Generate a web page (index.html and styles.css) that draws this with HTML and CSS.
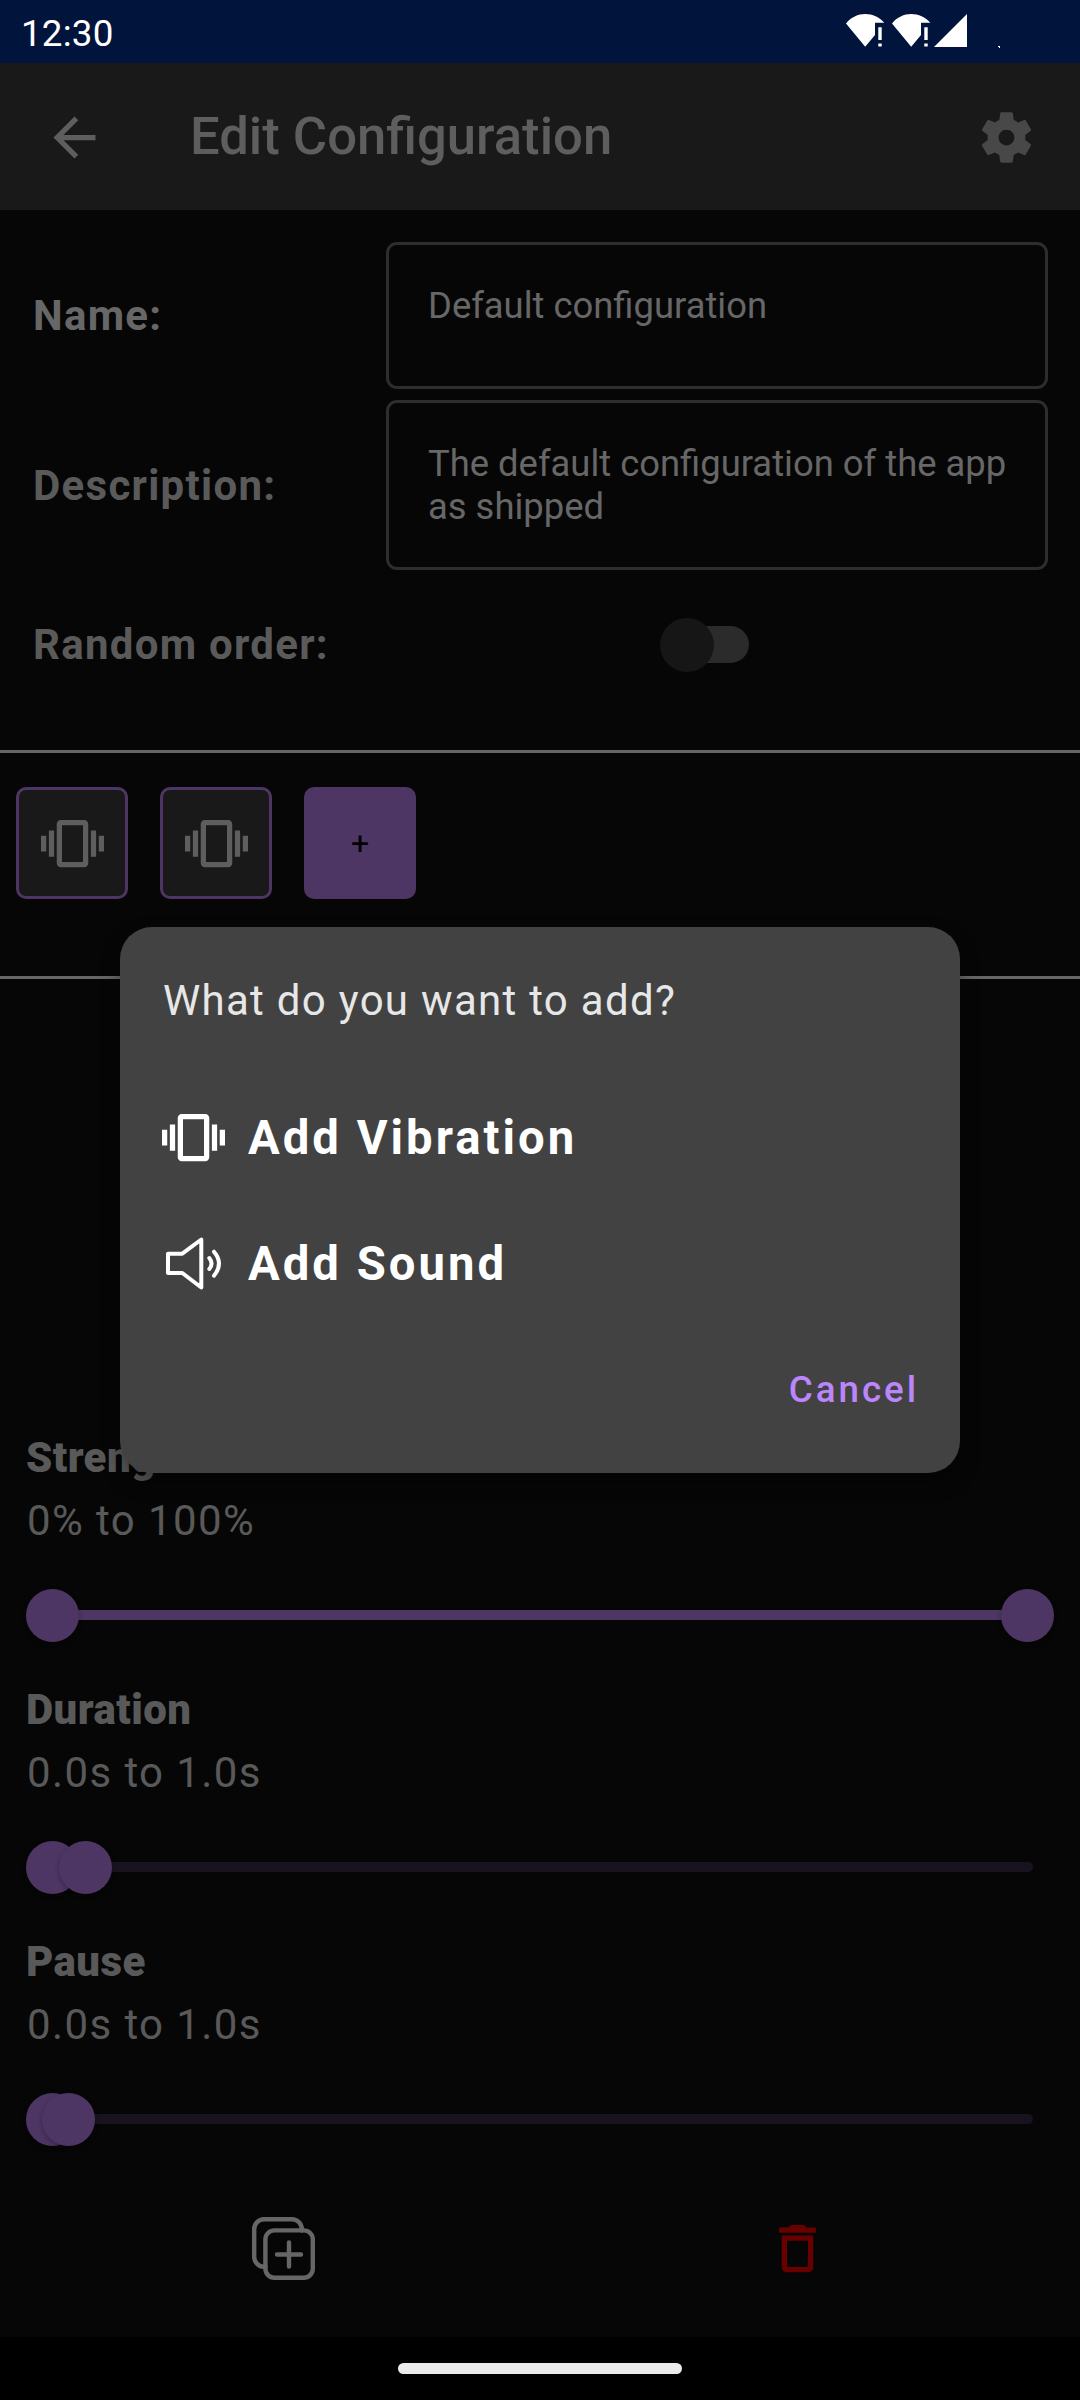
FILE: index.html
```html
<!DOCTYPE html>
<html lang="en">
<head>
<meta charset="utf-8">
<title>Edit Configuration</title>
<link rel="stylesheet" href="styles.css">
</head>
<body>
<svg class="defs" aria-hidden="true">
  <symbol id="vibration" viewBox="0 0 24 24"><path d="M0 15h2V9H0v6zm3 2h2V7H3v10zm19-8v6h2V9h-2zm-3 8h2V7h-2v10zM16.5 3h-9C6.67 3 6 3.67 6 4.5v15c0 .83.67 1.5 1.5 1.5h9c.83 0 1.5-.67 1.5-1.5v-15c0-.83-.67-1.5-1.5-1.5zM16 19H8V5h8v14z"/></symbol>
  <symbol id="wifi-alert" viewBox="0 0 40 34"><path d="M0 9.5C5 3.200 12 0 19.200 0S33.500 3.200 38.300 8.700H29V21L19.200 32.800z"/><path d="M32.300 13.300h3.400v12.800h-3.400zM32.300 29.600h3.400v3h-3.400z"/></symbol>
</svg>

<div class="screen">
  <header class="status-bar">
    <span class="clock">12:30</span>
    <div class="status-icons">
      <svg class="wifi"><use href="#wifi-alert"/></svg>
      <svg class="wifi"><use href="#wifi-alert"/></svg>
      <svg class="signal" viewBox="0 0 33 33"><path d="M33 0v33H0z"/></svg>
      <svg class="battery-dot" viewBox="0 0 2 2"><path d="M0 0h2v2H1V1H0z"/></svg>
    </div>
  </header>

  <nav class="app-bar">
    <svg class="icon back" viewBox="0 0 24 24"><path d="M20 11H7.830l5.590-5.590L12 4l-8 8 8 8 1.410-1.410L7.830 13H20v-2z"/></svg>
    <h1 class="title">Edit Configuration</h1>
    <svg class="icon gear" viewBox="0 0 24 24"><path d="M19.140 12.940c.04-.3.06-.61.06-.94 0-.32-.02-.64-.07-.94l2.030-1.580c.18-.14.23-.41.12-.61l-1.920-3.320c-.12-.22-.37-.29-.59-.22l-2.390.96c-.5-.38-1.030-.7-1.620-.94l-.36-2.540c-.04-.24-.24-.41-.48-.41h-3.840c-.24 0-.43.17-.47.41l-.36 2.540c-.59.24-1.130.57-1.620.94l-2.390-.96c-.22-.08-.47 0-.59.22L2.740 8.870c-.12.21-.08.47.12.61l2.030 1.580c-.05.3-.09.63-.09.94s.02.64.07.94l-2.030 1.580c-.18.14-.23.41-.12.61l1.920 3.320c.12.22.37.29.59.22l2.390-.96c.5.38 1.030.7 1.620.94l.36 2.540c.05.24.24.41.48.41h3.840c.24 0 .44-.17.47-.41l.36-2.540c.59-.24 1.130-.56 1.620-.94l2.390.96c.22.08.47 0 .59-.22l1.920-3.320c.12-.22.07-.47-.12-.61l-2.010-1.580zM12 15c-1.650 0-3-1.350-3-3s1.350-3 3-3 3 1.350 3 3-1.350 3-3 3z"/></svg>
  </nav>

  <section class="form">
    <div class="form-row">
      <span class="label label-name">Name:</span>
      <div class="field">Default configuration</div>
    </div>
    <div class="form-row">
      <span class="label">Description:</span>
      <div class="field">The default configuration of the app as shipped</div>
    </div>
    <div class="form-row switch-row">
      <span class="label">Random order:</span>
      <div class="switch"><div class="switch-thumb"></div></div>
    </div>
  </section>

  <section class="steps">
    <div class="tile"><svg class="icon"><use href="#vibration"/></svg></div>
    <div class="tile"><svg class="icon"><use href="#vibration"/></svg></div>
    <div class="tile tile-add">+</div>
  </section>

  <section class="sliders">
    <div class="setting">
      <h2 class="setting-name">Strength</h2>
      <p class="setting-value">0% to 100%</p>
      <div class="slider">
        <div class="track track-active"></div>
        <div class="thumbs"><i class="thumb" style="left:0%"></i><i class="thumb" style="left:100%"></i></div>
      </div>
    </div>
    <div class="setting">
      <h2 class="setting-name">Duration</h2>
      <p class="setting-value">0.0s to 1.0s</p>
      <div class="slider">
        <div class="track"></div>
        <div class="thumbs"><i class="thumb" style="left:0%"></i><i class="thumb" style="left:3.350%"></i></div>
      </div>
    </div>
    <div class="setting">
      <h2 class="setting-name">Pause</h2>
      <p class="setting-value">0.0s to 1.0s</p>
      <div class="slider">
        <div class="track"></div>
        <div class="thumbs"><i class="thumb" style="left:0%"></i><i class="thumb" style="left:1.667%"></i></div>
      </div>
    </div>
  </section>

  <footer class="actions">
    <svg class="icon copy" viewBox="0 0 63 63"><path d="M13.500 49.800H12A10 10 0 0 1 2.200 40V12A10 10 0 0 1 12 2.200H40A10 10 0 0 1 49.800 12V13.500"/><rect x="13.400" y="13.400" width="47.400" height="47.400" rx="9"/><path d="M37 25.500V49.500M25 37.500H49"/></svg>
    <svg class="icon trash" viewBox="0 0 24 24"><path d="M6 19c0 1.100.9 2 2 2h8c1.100 0 2-.9 2-2V7H6v12zM8 9h8v10H8V9zm7.500-5-1-1h-5l-1 1H5v2h14V4h-3.500z"/></svg>
  </footer>

  <div class="gesture-bar"><div class="pill"></div></div>

  <div class="dialog" role="dialog">
    <p class="dialog-title">What do you want to add?</p>
    <div class="option"><svg class="icon"><use href="#vibration"/></svg><span>Add Vibration</span></div>
    <div class="option"><svg class="icon sound" viewBox="0 0 63 63"><path d="M6 21.700H20.300L39.300 7.500V55.500L20.300 41H6z"/><path d="M47.300 26Q51.800 31.500 47.300 37M52 19.700Q62 31.500 52 43.700"/></svg><span>Add Sound</span></div>
    <div class="dialog-actions"><span class="cancel">Cancel</span></div>
  </div>
</div>
</body>
</html>
```
FILE: styles.css
```css
* { box-sizing: border-box; margin: 0; padding: 0; }
body { background: #060606; font-family: Roboto, sans-serif; }
.defs { display: none; }
.screen { position: relative; display: flex; flex-direction: column; width: 1080px; height: 2400px; overflow: hidden; background: #060606; }
.icon { display: block; flex: none; width: 63px; height: 63px; fill: currentColor; }

.status-bar { display: flex; justify-content: space-between; height: 63px; padding: 0 80px 0 21px; background: #00143c; color: #fff; }
.clock { font-size: 36.75px; line-height: 67px; letter-spacing: .2px; }
.status-icons { display: flex; padding-top: 14px; fill: #fff; }
.wifi { width: 40px; height: 34px; margin-right: 6px; }
.signal { width: 33px; height: 33px; margin: 0 31px 0 -4px; }
.battery-dot { width: 2px; height: 2px; margin-top: 32px; }

.app-bar { display: flex; align-items: center; height: 147px; padding: 1px 42px 0 43px; background: #191919; color: #5e5e5e; }
.title { flex: 1; margin-left: 84px; padding-bottom: 2px; font-size: 52.6px; font-weight: 500; line-height: 63px; }
.gear { color: #484848; }

.form { display: flex; flex-direction: column; gap: 11px; height: 540px; padding: 32px 32px 0; }
.form-row { display: flex; align-items: center; }
.label { width: 354px; padding-left: 1px; font-size: 42px; font-weight: 700; letter-spacing: 1.28px; color: #5a5a5a; }
.label-name { color: #676767; }
.field { flex: 1; min-height: 147px; padding: 39px 30px 39px 39px; border: 3px solid #2d2d2d; border-radius: 11px; font-size: 36.4px; line-height: 43px; color: #676767; }
.switch-row { height: 147px; margin-top: -10px; }
.switch { display: flex; align-items: center; width: 87px; height: 37px; margin-left: 276px; border-radius: 19px; background: #2b2b2b; }
.switch-thumb { flex: none; width: 54px; height: 54px; margin-left: -2px; border-radius: 50%; background: #161616; }

.steps { display: flex; gap: 32px; height: 229px; padding: 34px 16px; border-top: 3px solid #676666; border-bottom: 3px solid #676666; }
.tile { display: flex; align-items: center; justify-content: center; width: 112px; height: 112px; border: 3px solid #4d3664; border-radius: 10px; background: #191919; color: #5e5e5e; }
.tile-add { padding-bottom: 1px; background: #4d3664; color: #000; font-size: 32px; }

.sliders { margin-top: 447px; }
.setting { height: 252px; padding: 0 26px; }
.setting-name { font-size: 42px; font-weight: 900; line-height: 63px; letter-spacing: .45px; color: #595959; }
.setting-value { padding-left: 1px; font-size: 42px; line-height: 63px; letter-spacing: 1.4px; color: #595959; }
.slider { position: relative; display: flex; align-items: center; height: 126px; padding: 0 21px; }
.track { width: 100%; height: 10.5px; border-radius: 6px; background: #19131f; }
.track-active { background: #4d3664; }
.thumbs { position: absolute; top: 37px; left: 26.4px; right: 26.2px; height: 53px; }
.thumb { position: absolute; width: 53px; height: 53px; margin-left: -26.5px; border-radius: 50%; background: #4d3664; box-shadow: 0 2px 5px rgba(0, 0, 0, .3); }

.actions { display: flex; justify-content: space-around; height: 155px; padding: 35px 26px 0 27px; }
.copy { fill: none; stroke: #666; stroke-width: 4.4; stroke-linecap: round; }
.trash { color: #680000; }

.gesture-bar { display: flex; justify-content: center; height: 63px; padding-top: 26px; background: #000; }
.pill { width: 284px; height: 11px; border-radius: 6px; background: #ebebeb; }

.dialog { position: absolute; left: 120px; top: 927px; width: 840px; height: 546px; padding: 42px 41px 0 42px; border-radius: 32px; background: #424242; box-shadow: 0 10px 20px rgba(0, 0, 0, .35); }
.dialog-title { margin: 0 0 43px 1px; font-size: 42px; line-height: 63px; letter-spacing: 1.29px; color: #e7e7e7; }
.option { display: flex; align-items: center; gap: 23px; height: 126px; font-size: 47.25px; font-weight: 700; letter-spacing: 3px; color: #fff; }
.option .icon { margin-bottom: 1px; }
.sound { fill: none; stroke: #fff; stroke-width: 4; stroke-linejoin: round; stroke-linecap: round; }
.dialog-actions { display: flex; align-items: center; justify-content: flex-end; height: 125px; }
.cancel { font-size: 36.75px; font-weight: 500; letter-spacing: 2.95px; color: #bb86fc; }
```
